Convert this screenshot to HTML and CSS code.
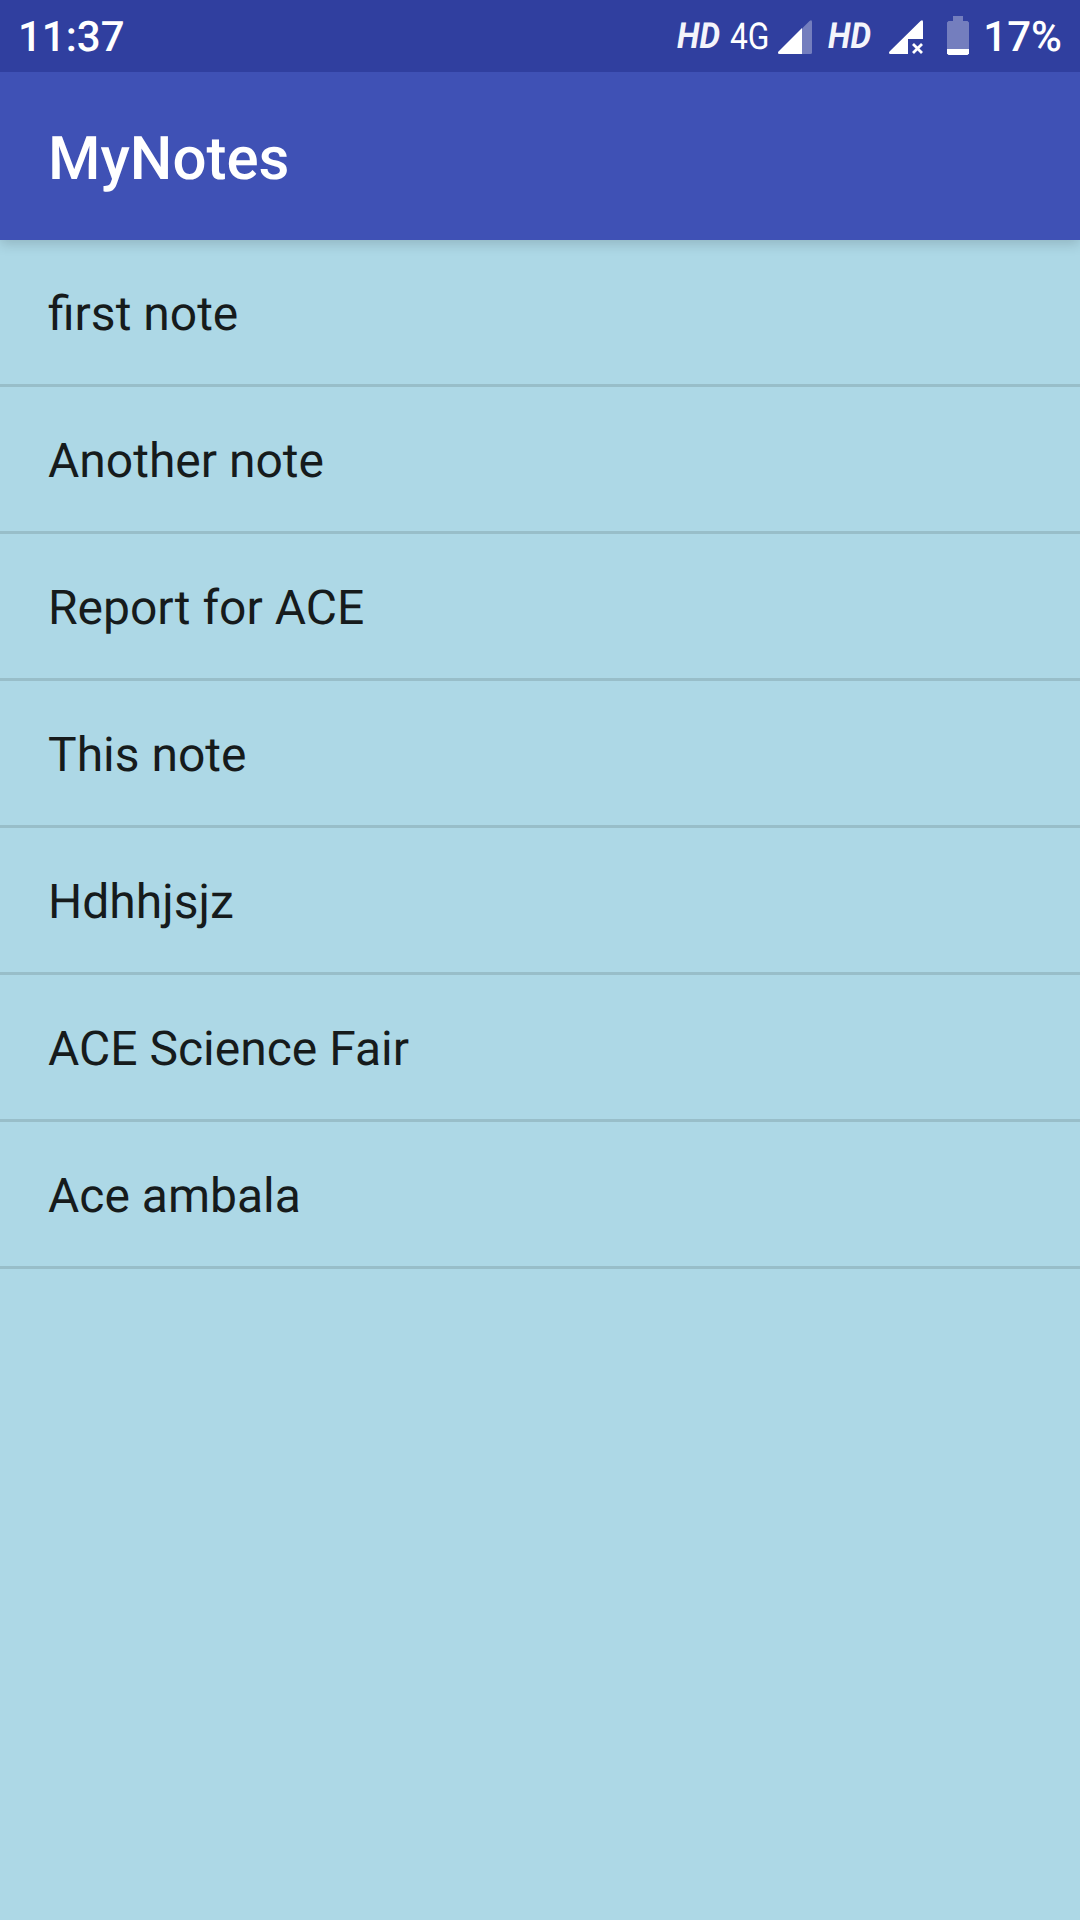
FILE: index.html
```html
<!DOCTYPE html>
<html lang="en">
<head>
<meta charset="utf-8">
<title>MyNotes</title>
<link rel="stylesheet" href="styles.css">
</head>
<body>
<div class="status-bar">
  <span class="clock">11:37</span>
  <div class="status-icons">
    <svg class="hd" width="48" height="72" viewBox="0 0 48 72"><text class="hd-text" x="1" y="48" textLength="43" lengthAdjust="spacingAndGlyphs">HD</text></svg>
    <svg class="network" width="48" height="72" viewBox="0 0 48 72"><text class="network-text" x="1" y="48.500" textLength="39.500" lengthAdjust="spacingAndGlyphs">4G</text></svg>
    <svg class="signal" width="34" height="34" viewBox="0 0 34 34"><path fill="#fff" fill-opacity=".33" d="M24 8.500L31.500 1Q34 -1 34 2V32.500Q34 34 32.500 34H24Z"/><path fill="#fff" d="M24 8V34H1.500Q-1 33.500 .5 31.500Z"/></svg>
    <svg class="hd second" width="48" height="72" viewBox="0 0 48 72"><text class="hd-text" x="1" y="48" textLength="43" lengthAdjust="spacingAndGlyphs">HD</text></svg>
    <svg class="signal no-sim" width="34" height="34" viewBox="0 0 34 34"><path fill="#fff" d="M31.500 1Q34 -1 34 2V19H19V34H1.500Q-1 33.500 .5 31.500Z"/><path stroke="#fff" stroke-width="2.800" d="M24 24L33 33M33 24L24 33"/></svg>
    <svg class="battery" width="22" height="39" viewBox="0 0 22 39"><path fill="#fff" fill-opacity=".33" d="M6 0H16V5H20.500L22 6.500V33H0V6.500L1.500 5H6Z"/><path fill="#fff" d="M0 33H22V37.500L20.500 39H1.500L0 37.500Z"/></svg>
    <span class="percent">17%</span>
  </div>
</div>
<header class="app-bar"><h1 class="title">MyNotes</h1></header>
<ul class="notes">
  <li class="note">first note</li>
  <li class="note">Another note</li>
  <li class="note">Report for ACE</li>
  <li class="note">This note</li>
  <li class="note">Hdhhjsjz</li>
  <li class="note">ACE Science Fair</li>
  <li class="note">Ace ambala</li>
</ul>
</body>
</html>
```
FILE: styles.css
```css
* { box-sizing: border-box; }
body {
  margin: 0;
  height: 1920px;
  overflow: hidden;
  background: #add8e6;
  font-family: Roboto, sans-serif;
  text-rendering: geometricPrecision;
}
.status-bar {
  display: flex;
  justify-content: space-between;
  height: 72px;
  padding: 0 18px;
  background: #303f9f;
  color: #fff;
}
.clock, .percent {
  font-size: 42px;
  font-weight: 500;
  line-height: 76px;
}
.status-icons { display: flex; }
.status-icons svg { overflow: visible; }
.hd-text {
  font-size: 36px;
  font-weight: 700;
  font-style: italic;
  fill: #f4f4fb;
}
.network-text { font-size: 37px; fill: #fff; }
.network { margin-left: 5px; }
.signal { margin: 20px 0 0 1px; }
.second { margin-left: 15px; }
.no-sim { margin-left: 14px; }
.battery { margin: 16px 14px 0 24px; }
.app-bar {
  position: relative;
  height: 168px;
  padding: 0 48px;
  background: #3f51b5;
  box-shadow: 0 4px 12px rgba(0, 0, 0, .16);
  clip-path: inset(0 0 -20px 0);
}
.title {
  margin: 0;
  font-size: 60px;
  font-weight: 500;
  line-height: 174px;
  color: #fff;
}
.notes {
  margin: 0;
  padding: 0;
  list-style: none;
}
.note {
  height: 147px;
  padding: 0 48px;
  border-bottom: 3px solid #98bec9;
  font-size: 48px;
  line-height: 148px;
  color: #161b1c;
}
```
